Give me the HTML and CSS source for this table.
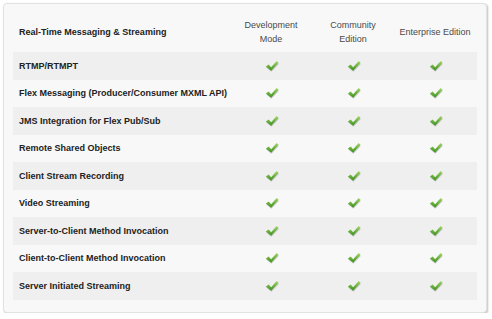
FILE: index.html
```html
<!DOCTYPE html>
<html>
<head>
<meta charset="utf-8">
<link rel="stylesheet" href="styles.css">
</head>
<body>
<svg class="defs" width="0" height="0" aria-hidden="true">
  <defs>
    <linearGradient id="g" x1="0" y1="0" x2="0" y2="1">
      <stop offset="0" stop-color="#a6d86a"/>
      <stop offset="0.5" stop-color="#6cb33f"/>
      <stop offset="1" stop-color="#3f8f22"/>
    </linearGradient>
    <symbol id="chk" viewBox="0 0 16 13">
      <path d="M1 7.5 L4.2 5.3 L7 8.3 L13.3 1.3 L15.5 3.3 L7 12.3 Z" fill="rgba(0,0,0,0.18)" transform="translate(0.3,0.8)"/>
      <path d="M1 7 L4.2 4.8 L7 7.8 L13.3 0.8 L15.5 2.8 L7 11.8 Z" fill="url(#g)"/>
    </symbol>
  </defs>
</svg>
<div class="card">
  <div class="row head">
    <div class="label">Real-Time Messaging &amp; Streaming</div>
    <div class="col">Development<br>Mode</div>
    <div class="col">Community<br>Edition</div>
    <div class="col">Enterprise Edition</div>
  </div>
  <div class="rows">
    <div class="row"><div class="label">RTMP/RTMPT</div><div class="col"><svg class="ck"><use href="#chk"/></svg></div><div class="col"><svg class="ck"><use href="#chk"/></svg></div><div class="col"><svg class="ck"><use href="#chk"/></svg></div></div>
    <div class="row"><div class="label">Flex Messaging (Producer/Consumer MXML API)</div><div class="col"><svg class="ck"><use href="#chk"/></svg></div><div class="col"><svg class="ck"><use href="#chk"/></svg></div><div class="col"><svg class="ck"><use href="#chk"/></svg></div></div>
    <div class="row"><div class="label">JMS Integration for Flex Pub/Sub</div><div class="col"><svg class="ck"><use href="#chk"/></svg></div><div class="col"><svg class="ck"><use href="#chk"/></svg></div><div class="col"><svg class="ck"><use href="#chk"/></svg></div></div>
    <div class="row"><div class="label">Remote Shared Objects</div><div class="col"><svg class="ck"><use href="#chk"/></svg></div><div class="col"><svg class="ck"><use href="#chk"/></svg></div><div class="col"><svg class="ck"><use href="#chk"/></svg></div></div>
    <div class="row"><div class="label">Client Stream Recording</div><div class="col"><svg class="ck"><use href="#chk"/></svg></div><div class="col"><svg class="ck"><use href="#chk"/></svg></div><div class="col"><svg class="ck"><use href="#chk"/></svg></div></div>
    <div class="row"><div class="label">Video Streaming</div><div class="col"><svg class="ck"><use href="#chk"/></svg></div><div class="col"><svg class="ck"><use href="#chk"/></svg></div><div class="col"><svg class="ck"><use href="#chk"/></svg></div></div>
    <div class="row"><div class="label">Server-to-Client Method Invocation</div><div class="col"><svg class="ck"><use href="#chk"/></svg></div><div class="col"><svg class="ck"><use href="#chk"/></svg></div><div class="col"><svg class="ck"><use href="#chk"/></svg></div></div>
    <div class="row"><div class="label">Client-to-Client Method Invocation</div><div class="col"><svg class="ck"><use href="#chk"/></svg></div><div class="col"><svg class="ck"><use href="#chk"/></svg></div><div class="col"><svg class="ck"><use href="#chk"/></svg></div></div>
    <div class="row"><div class="label">Server Initiated Streaming</div><div class="col"><svg class="ck"><use href="#chk"/></svg></div><div class="col"><svg class="ck"><use href="#chk"/></svg></div><div class="col"><svg class="ck"><use href="#chk"/></svg></div></div>
  </div>
</div>
</body>
</html>
```
FILE: styles.css
```css
html, body {
  margin: 0;
  padding: 0;
  background: #ffffff;
}
body {
  font-family: "Liberation Sans", Arial, sans-serif;
  padding: 3px 0 0 3px;
}
.defs {
  position: absolute;
  width: 0;
  height: 0;
}
.card {
  box-sizing: border-box;
  width: 484px;
  height: 310px;
  background: #f8f8f8;
  border: 1px solid #e2e2e2;
  border-radius: 4px;
  box-shadow: 1px 1px 2px rgba(0, 0, 0, 0.25);
  padding: 8px 9px 0 9px;
}
.row {
  display: grid;
  grid-template-columns: 217px 82px 82px 82px;
  align-items: center;
  height: 27.5px;
}
.row.head {
  height: 40px;
}
.rows .row:nth-child(odd) {
  background: #efefef;
}
.label {
  padding-left: 6px;
  font-size: 9px;
  font-weight: bold;
  color: #222222;
  white-space: nowrap;
}
.col {
  display: flex;
  justify-content: center;
  align-items: center;
}
.head .col {
  display: block;
  font-size: 9px;
  line-height: 14px;
  color: #4a4a4a;
  text-align: center;
}
.ck {
  width: 14px;
  height: 12px;
  display: block;
  margin-left: 1px;
}
```
